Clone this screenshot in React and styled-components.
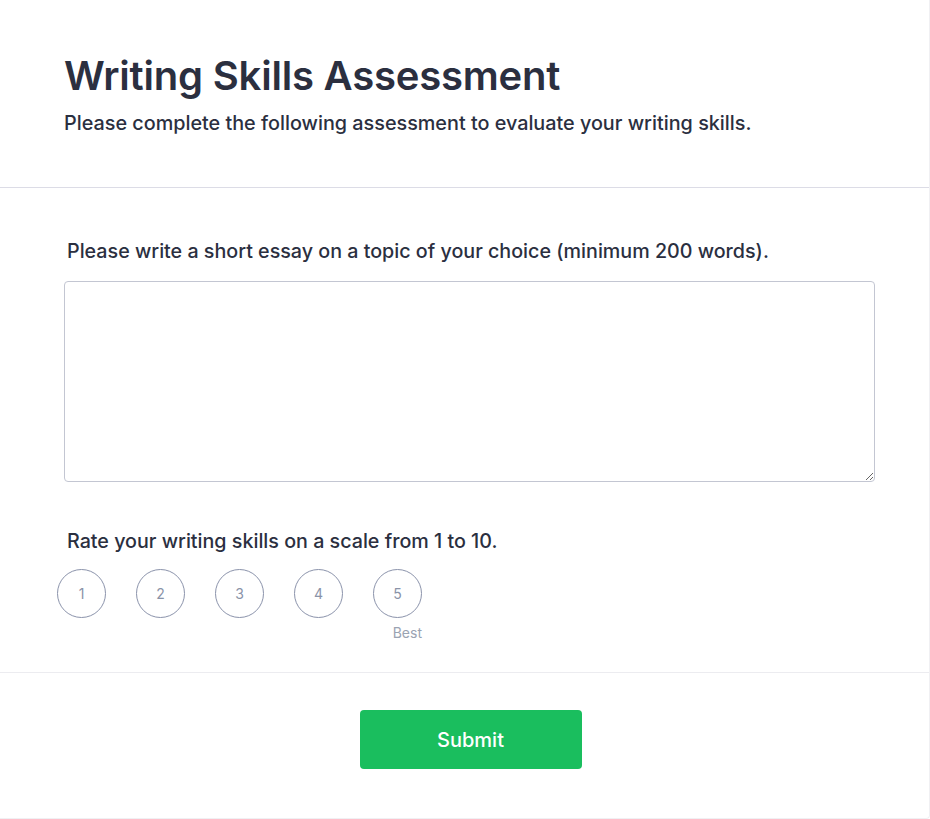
import React from "react";
import styled, { createGlobalStyle } from "styled-components";

const Global = createGlobalStyle`
  html, body { margin: 0; padding: 0; background: #ffffff; }
  body { font-family: Inter, "Noto Sans", sans-serif; color: #2b2f3f; }
  * { box-sizing: border-box; }
`;

const Card = styled.div`
  width: 930px;
  height: 819px;
  background: #ffffff;
  border-right: 1px solid #f0f0f3;
  border-bottom: 1px solid #f0f0f3;
  border-bottom-right-radius: 4px;
  display: flex;
  flex-direction: column;
`;

const Header = styled.header`
  padding: 52px 64px 0;
  height: 188px;
  border-bottom: 1px solid #dcdce6;
`;

const Title = styled.h1`
  margin: 0;
  font-size: 40px;
  font-weight: 600;
  line-height: 48px;
  color: #2b2f3f;
  letter-spacing: -0.2px;
`;

const Subtitle = styled.p`
  margin: 10px 0 0;
  font-size: 19.8px;
  line-height: 26px;
  font-weight: 500;
  color: #2b2f3f;
`;

const Body = styled.section`
  padding: 0 55px 0 57px;
  height: 485px;
  border-bottom: 1px solid #ececf0;
  display: flex;
  flex-direction: column;
`;

const Question = styled.label`
  display: block;
  padding-left: 10px;
  margin-top: ${(p) => p.$top}px;
  font-size: 19.7px;
  line-height: 26px;
  font-weight: 500;
  color: #2b2f3f;
`;

const TextArea = styled.textarea`
  display: block;
  margin: 17px 0 0 7px;
  width: 811px;
  height: 201px;
  border: 1px solid #c3c6d2;
  border-radius: 4px;
  resize: vertical;
  font-family: inherit;
  font-size: 16px;
  padding: 8px 12px;
  outline: none;
`;

const Scale = styled.div`
  display: flex;
  gap: 30px;
  margin-top: 15px;
`;

const Option = styled.div`
  display: flex;
  flex-direction: column;
  align-items: flex-end;
`;

const Circle = styled.button`
  width: 49px;
  height: 49px;
  border-radius: 50%;
  border: 1px solid #8b93ab;
  background: #ffffff;
  color: #8a93a8;
  font-family: inherit;
  font-size: 14px;
  display: flex;
  align-items: center;
  justify-content: center;
  padding: 0;
  cursor: pointer;
`;

const Hint = styled.span`
  margin-top: 6px;
  font-size: 14px;
  line-height: 17px;
  color: #9aa3b2;
`;

const Footer = styled.footer`
  flex: 1;
  display: flex;
  justify-content: center;
  padding: 37px 0 0 12px;
`;

const Submit = styled.button`
  width: 222px;
  height: 59px;
  background: #1abe5e;
  border: none;
  border-radius: 4px;
  color: #ffffff;
  font-family: inherit;
  font-size: 20px;
  font-weight: 500;
  cursor: pointer;
`;

export default function App() {
  const options = [1, 2, 3, 4, 5];
  return (
    <>
      <Global />
      <Card>
        <Header>
          <Title>Writing Skills Assessment</Title>
          <Subtitle>Please complete the following assessment to evaluate your writing skills.</Subtitle>
        </Header>
        <Body>
          <Question $top={50}>
            Please write a short essay on a topic of your choice (minimum 200 words).
          </Question>
          <TextArea />
          <Question $top={46}>Rate your writing skills on a scale from 1 to 10.</Question>
          <Scale>
            {options.map((n) => (
              <Option key={n}>
                <Circle type="button">{n}</Circle>
                {n === 5 && <Hint>Best</Hint>}
              </Option>
            ))}
          </Scale>
        </Body>
        <Footer>
          <Submit type="button">Submit</Submit>
        </Footer>
      </Card>
    </>
  );
}
